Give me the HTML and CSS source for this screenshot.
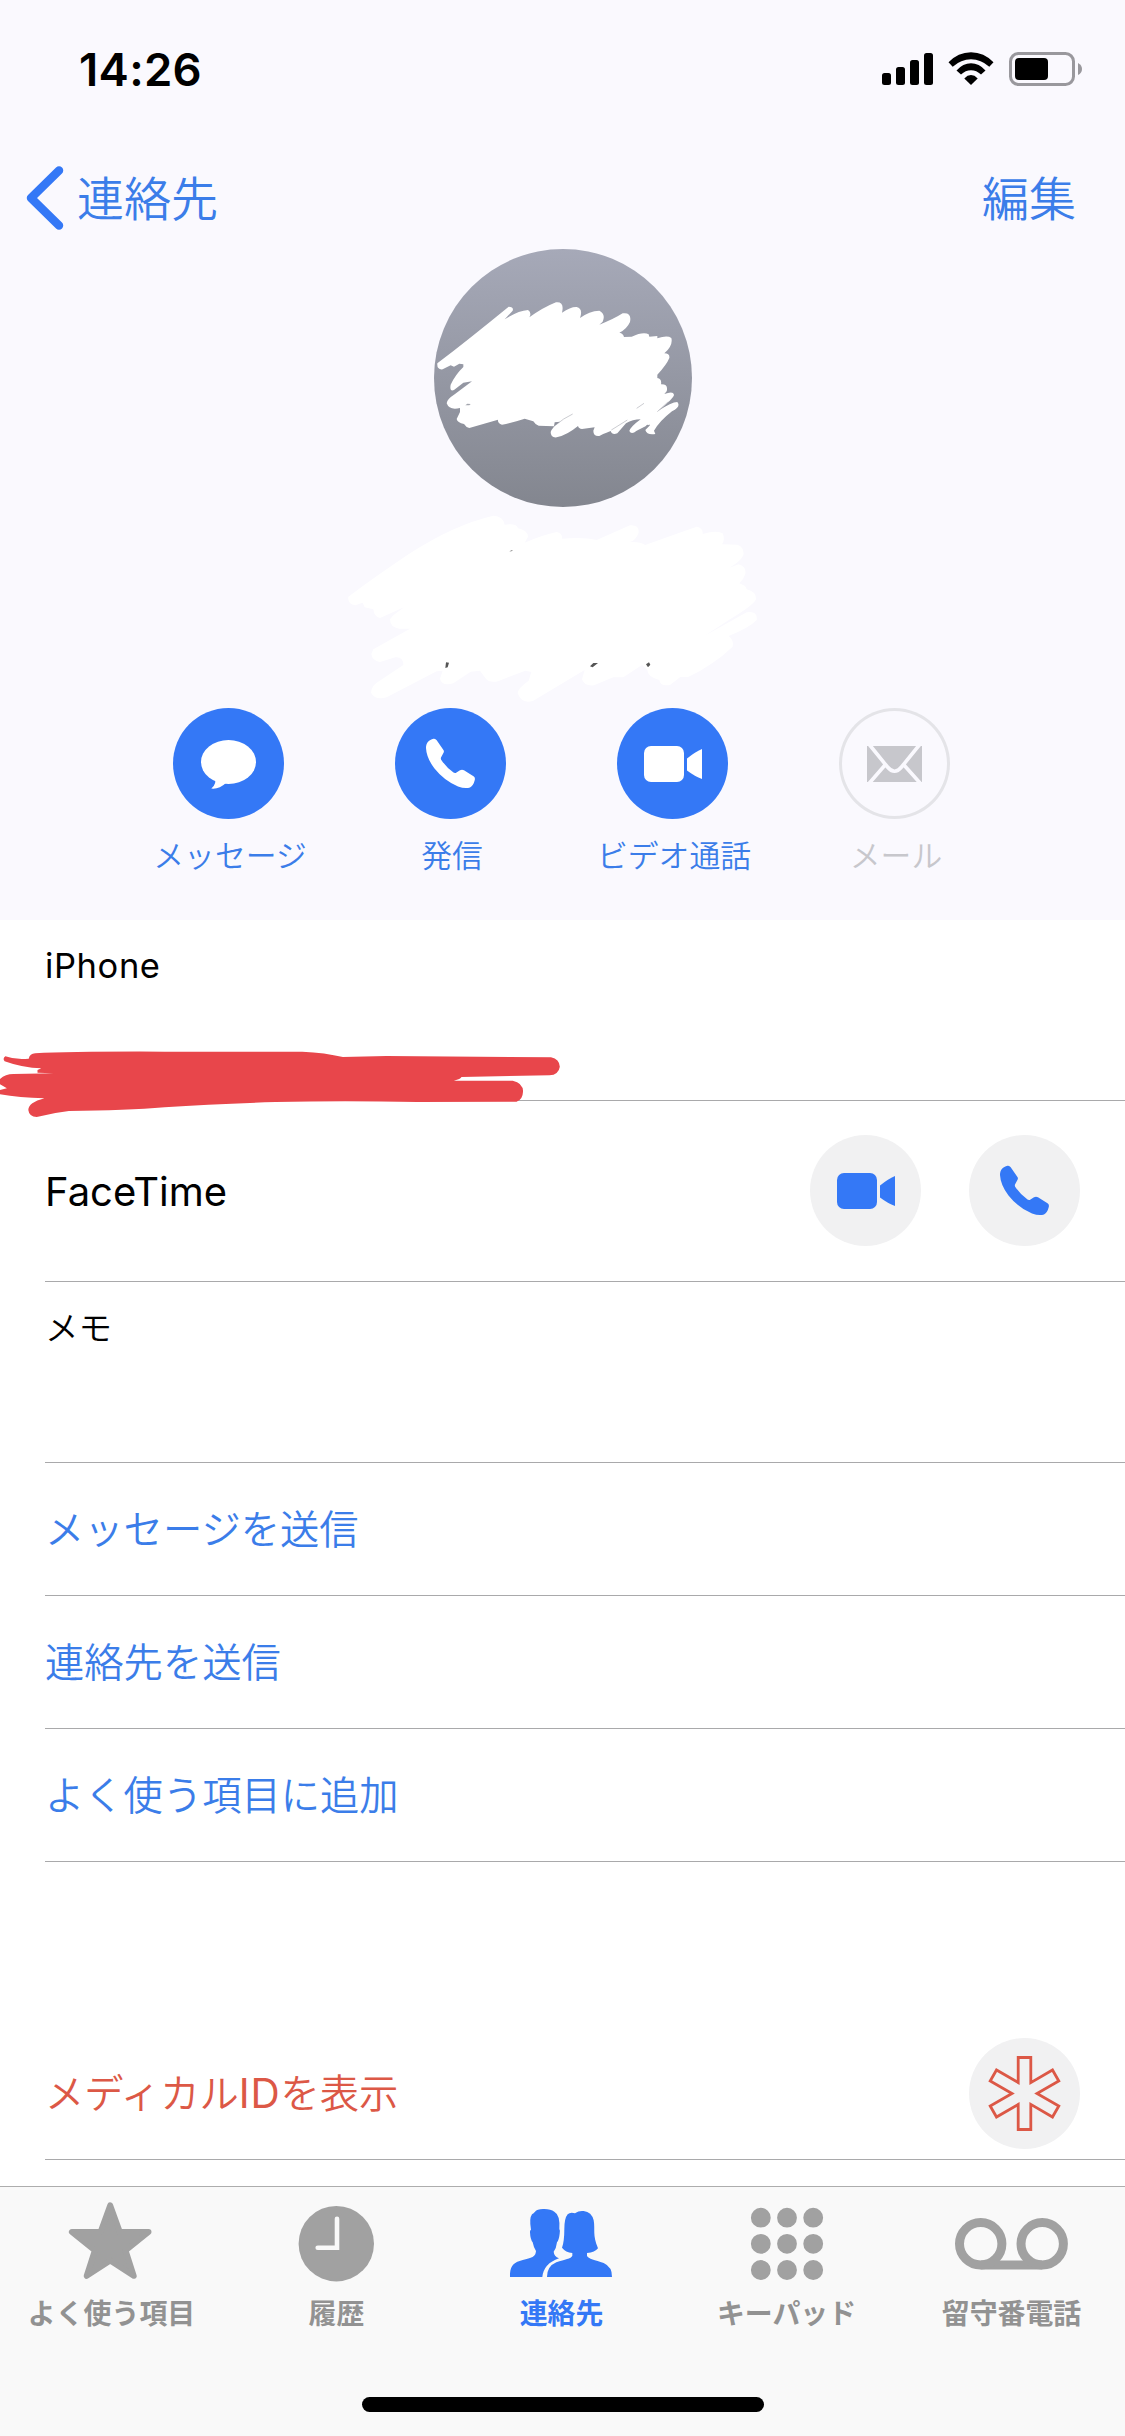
FILE: index.html
```html
<!DOCTYPE html>
<html lang="ja">
<head>
<meta charset="utf-8">
<title>連絡先</title>
<link rel="stylesheet" href="styles.css">
</head>
<body>
<svg class="defs" width="0" height="0" aria-hidden="true">
  <symbol id="video" viewBox="0 0 111 111"><rect x="27" y="38" width="40" height="36" rx="7"/><path d="M70 50.5Q78 44 85 41V71Q78 68.5 70 62.5Z"/></symbol>
  <symbol id="phone" viewBox="0 0 111 111"><path d="M31 40C31 35 34 31.8 38.5 30.8Q40.5 30.4 41.7 32.3L48.6 42.3Q49.3 43.6 48.4 45L46 49.5Q45.500 51 46.500 52.300Q51.500 59.500 58.500 64.600Q60 65.500 61.500 64.500L65 62.300Q67 61.300 69 62.300L78.500 68.300Q80.500 69.600 79.700 72.300Q78.500 77.500 75 79.500Q70 81 63 78.500Q49 72.500 39.500 60.500Q31.500 50 31 40Z"/></symbol>
</svg>
<main class="screen">
  <header class="hero">
    <div class="status">
      <span class="time">14:26</span>
      <svg class="indicators" width="202" height="36" viewBox="881 51 202 36">
        <g><rect x="882" y="73" width="9" height="12" rx="2.500"/><rect x="896" y="67" width="9" height="18" rx="2.500"/><rect x="910" y="60" width="9" height="25" rx="2.500"/><rect x="924" y="53" width="9" height="32" rx="2.500"/></g>
        <path d="M948.500 62.300Q958 52.200 971 52.200T993.500 62.300L989.300 66.700Q981 59.200 971 59.200T952.700 66.700Z"/>
        <path d="M956.500 70.500Q963 63.300 971 63.300T985.500 70.500L981 74.600Q976.500 70.300 971 70.300T961 74.600Z"/>
        <path d="M964.300 78.400Q967.500 75 971 75T977.700 78.400L971 85Z"/>
        <rect x="1010.500" y="53.500" width="63" height="31" rx="8" fill="none" stroke="#99989d" stroke-width="3"/>
        <rect x="1015" y="58" width="33" height="22" rx="4"/>
        <path d="M1078 63Q1082 65 1082 69T1078 75Z" fill="#99989d"/>
      </svg>
    </div>
    <nav class="nav">
      <a class="back"><svg width="38" height="64" viewBox="0 0 38 64"><path d="M33 4.500L5 32L33 59.500" fill="none" stroke="#3478f6" stroke-width="8.500" stroke-linecap="round" stroke-linejoin="round"/></svg><span>連絡先</span></a>
      <a>編集</a>
    </nav>
    <div class="avatar"></div>
    <svg class="scribble" viewBox="0 0 1350 1470" fill="#fff">
      <path d="M322 400Q420 325 536 230Q552 230 548 242L524 268Q565 242 594 240Q606 248 598 262Q640 232 678 217Q704 214 696 248Q722 230 740 231Q760 236 750 264Q778 243 808 242Q828 252 818 275L808 284Q850 268 878 250Q906 246 900 276Q890 298 868 308Q880 310 882 321L905 320Q940 304 956 313L958 320L982 318V325Q1012 315 1024 324Q1030 346 1003 370Q1020 370 1018 384Q1010 404 982 434V444Q996 446 993 463Q1016 462 1010 484L1003 492Q1030 482 1032 494Q1032 504 984 543Q1025 516 1042 516Q1054 530 1026 544Q990 572 972 602L976 612Q950 616 946 600L960 586Q950 582 948 588L920 602Q904 616 898 603Q902 590 932 568Q908 568 888 580L862 610Q846 616 842 603Q814 614 808 618Q790 620 790 602L794 592L756 597Q746 596 744 588Q710 616 680 622Q662 624 662 606Q666 592 690 575L674 577L672 589L626 587Q614 582 610 574L584 566Q548 578 516 584Q502 580 504 569L418 594Q408 592 402 582Q382 578 380 567L390 546V534Q358 542 350 520Q350 508 372 494L426 454L400 458L372 480Q358 486 362 464Q376 434 400 411L400 403L388 401L372 410L362 406L338 418Q320 420 322 400Z"/>
      <path d="M55 1100Q150 1030 240 970Q370 885 490 857Q520 858 524 884Q560 878 564 895Q592 900 594 920L584 938Q640 914 680 906Q698 910 696 926Q760 920 800 930L900 886Q928 884 926 908Q918 930 900 936Q930 934 946 945Q1000 925 1100 890Q1120 894 1118 912Q1160 900 1178 910Q1186 930 1176 943L1222 944Q1244 952 1240 976Q1230 996 1198 1013L1226 1003Q1250 1010 1246 1032Q1240 1050 1228 1060Q1250 1068 1250 1078Q1280 1086 1278 1108Q1270 1126 1200 1168L1124 1217L1250 1147Q1284 1142 1280 1170Q1260 1192 1196 1218Q1212 1230 1208 1250Q1150 1305 1076 1340Q1060 1342 1052 1340L1020 1365Q990 1370 988 1350Q952 1340 952 1320L936 1305L880 1342L850 1342L792 1366Q764 1370 756 1348L764 1320L610 1412Q576 1424 563 1390Q564 1374 596 1352L604 1326L586 1322L508 1352Q480 1362 466 1344L450 1322L422 1325L370 1360Q336 1370 330 1346L338 1322L320 1324L170 1402Q136 1412 123 1388Q124 1370 140 1358L220 1305Q220 1280 196 1282L150 1296Q126 1292 124 1272L130 1258L240 1196L208 1196Q180 1192 180 1168L190 1156L222 1132L150 1164Q132 1160 130 1138L104 1132L98 1118L76 1126Q52 1122 55 1100Z"/>
      <g fill="#555"><path d="M348 1297L357 1298L353 1312L346 1314ZM780 1309L790 1299L804 1299L788 1312ZM948 1303L957 1297L961 1304L954 1312ZM538 964L550 959L544 964Z"/><path d="M406 526L412 521L422 522L418 526Z" fill="#a2a5ad"/></g>
      <g fill="none" stroke="#9699a2" stroke-width="1.500"><path d="M676 586Q700 565 728 552M844 600L892 570M920 535L942 520M982 545L1015 515M928 602L960 584"/></g>
    </svg>
    <div class="actions">
      <a class="action"><span class="disc"><svg viewBox="0 0 111 111"><ellipse cx="55.500" cy="54" rx="27.500" ry="22"/><path d="M42 69Q44 76 38.300 80.500Q46 81.500 53 75Z"/></svg></span><span class="label">メッセージ</span></a>
      <a class="action"><span class="disc"><svg><use href="#phone"/></svg></span><span class="label">発信</span></a>
      <a class="action"><span class="disc"><svg><use href="#video"/></svg></span><span class="label">ビデオ通話</span></a>
      <a class="action off"><span class="disc"><svg viewBox="0 0 111 111"><path d="M28 38H83V74H28Z"/><path d="M29.500 35.500L48.500 59Q55.500 67.500 62.500 59L81.500 35.500M46.500 56.500L30 75.500M64.500 56.500L81.500 75.500" fill="none" stroke="#faf9fe" stroke-width="3.600"/></svg></span><span class="label">メール</span></a>
    </div>
  </header>
  <section class="list">
    <div class="row number"><span>iPhone</span></div>
    <div class="row facetime"><span>FaceTime</span>
      <span class="disc soft"><svg><use href="#video"/></svg></span>
      <span class="disc soft"><svg><use href="#phone"/></svg></span>
    </div>
    <div class="row memo"><span>メモ</span></div>
    <a class="row link">メッセージを送信</a>
    <a class="row link">連絡先を送信</a>
    <a class="row link">よく使う項目に追加</a>
    <a class="row medical"><span>メディカル<b>ID</b>を表示</span>
      <span class="disc soft"><svg viewBox="0 0 111 111"><path d="M49.200 19.500H61.800V44.600L83.500 32L89.800 43L68 55.500L89.800 68L83.500 79L61.800 66.400V91.500H49.200V66.400L27.500 79L21.200 68L43 55.500L21.200 43L27.500 32L49.200 44.600Z" fill="none" stroke="#dc5846" stroke-width="2.800"/></svg></span>
    </a>
    <svg class="redaction" viewBox="0 450 1568 210" preserveAspectRatio="none"><path d="M14 469Q40 480 75 476Q78 461 92 460Q190 454 430 455L790 455Q850 458 896 471L1010 468L1440 472Q1462 478 1463 500Q1460 524 1436 526L1206 531Q1204 537 1186 542L1340 542Q1366 548 1367 574Q1366 600 1350 605L1090 606Q900 602 720 606Q560 612 430 622Q330 632 180 633Q140 638 96 651Q76 650 74 630Q74 608 116 595Q50 593 0 583V570L18 565L0 553V537Q14 522 35 522L140 520L98 518V510L108 505Q60 504 12 484Q6 476 14 469Z" fill="#e8464b"/></svg>
  </section>
  <footer class="tabbar">
    <div class="tabs">
      <a class="tab"><svg viewBox="0 0 126 92"><path d="M61.200 10.400L70.800 37H99.500L76.500 55.500L84.700 80.800L61.200 65.500L37.700 80.800L45.900 55.500L22.900 37H51.600Z" stroke="#a1a1a1" stroke-width="6" stroke-linejoin="round"/></svg>よく使う項目</a>
      <a class="tab"><svg viewBox="0 0 126 92"><circle cx="62.300" cy="48.700" r="37.700"/><path d="M63 23.800V52.700H43.700" fill="none" stroke="#f9f9f9" stroke-width="4.600" stroke-linecap="round"/></svg>履歴</a>
      <a class="tab on"><svg viewBox="0 0 378 276"><path d="M33 246C32 216 42 204 62 198C88 190 108 188 110 174L111 168Q104 158 101 142Q94 134 93 112Q92 106 96 104Q90 70 99 58Q104 55 108 50Q114 42 132 42Q154 41 166 50Q184 60 181 102Q184 106 182 116Q180 134 174 142Q172 160 164 170Q165 184 180 190Q134 206 130 246Z"/><path d="M144 246Q144 214 172 202C198 192 216 192 220 182V174Q200 172 189 158Q196 140 196 102Q196 70 206 58Q214 50 228 55Q240 46 254 48Q278 51 284 76C289 104 280 120 297 160Q288 172 264 174V182C268 192 288 194 314 204Q340 216 339 246Z"/></svg>連絡先</a>
      <a class="tab"><svg viewBox="0 0 126 92"><path d="M36.800 22.700h.01M63 22.700h.01M89.200 22.700h.01M36.800 48.800h.01M63 48.800h.01M89.200 48.800h.01M36.800 75h.01M63 75h.01M89.200 75h.01" stroke="#a1a1a1" stroke-width="19.800" stroke-linecap="round"/></svg>キーパッド</a>
      <a class="tab"><svg viewBox="0 0 126 92"><path d="M31.700 70H93.200" stroke="#a1a1a1" stroke-width="9"/><g fill="none" stroke="#a1a1a1" stroke-width="9"><circle cx="31.700" cy="48.800" r="21.200"/><circle cx="93.200" cy="48.800" r="21.200"/></g></svg>留守番電話</a>
    </div>
    <div class="home"></div>
  </footer>
</main>
</body>
</html>
```
FILE: styles.css
```css
* { box-sizing: border-box; }
body {
  margin: 0;
  background: #fff;
  color: #000;
  font-family: Inter, "Noto Sans CJK JP", sans-serif;
  font-weight: 350;
}
svg { display: block; }
.defs { position: absolute; }
.screen {
  position: relative;
  display: flex;
  flex-direction: column;
  width: 1125px;
  height: 2436px;
  overflow: hidden;
}
.hero {
  position: relative;
  height: 920px;
  background: #faf9fe;
}
.status {
  display: flex;
  align-items: center;
  justify-content: space-between;
  height: 138px;
  padding: 0 42px 0 79px;
}
.time { font-size: 45.5px; font-weight: 600; letter-spacing: .3px; }
.nav {
  display: flex;
  align-items: center;
  justify-content: space-between;
  height: 111px;
  padding: 9px 49px 0 26px;
  color: #3b7de9;
  font-size: 47px;
  line-height: 60px;
}
.nav span, .nav > a:last-child { padding-top: 1px; }
.back { display: flex; align-items: center; gap: 13px; }
.avatar {
  width: 258px;
  height: 258px;
  margin: 0 auto 201px;
  border-radius: 50%;
  background: linear-gradient(#a6a9b8, #83868f);
}
.scribble {
  position: absolute;
  left: 330px;
  top: 230px;
  width: 450px;
  height: 490px;
}
.actions {
  position: relative;
  display: grid;
  grid-template-columns: repeat(4, 222px);
  padding-left: 117px;
}
.action {
  display: flex;
  flex-direction: column;
  align-items: center;
  gap: 16px;
  color: #3b7de9;
  font-size: 30.8px;
  line-height: 40px;
  white-space: nowrap;
}
.label { padding: 1px 0 0 4px; }
.disc {
  flex: none;
  width: 111px;
  height: 111px;
  border-radius: 50%;
  background: #3478f6;
  fill: #fff;
}
.disc svg { width: 111px; height: 111px; }
.off { color: #c7c7cc; }
.off .disc {
  background: none;
  box-shadow: inset 0 0 0 3px #e4e4e8;
  fill: #c7c7cc;
}
.disc.soft { background: #f1f1f2; fill: #3478f6; }
.list { position: relative; flex: 1; }
.row {
  display: flex;
  align-items: center;
  margin-left: 45px;
  border-bottom: 1px solid #a9a9ab;
  font-size: 39.3px;
  line-height: 50px;
}
.number {
  align-items: flex-start;
  height: 181px;
  padding-top: 21px;
  font-size: 34.5px;
  font-weight: 400;
  letter-spacing: .6px;
}
.facetime {
  gap: 48px;
  height: 181px;
  padding: 0 45px 2px 0;
  font-size: 40px;
  font-weight: 400;
}
.facetime > :first-child { flex: 1; padding-top: 3px; }
.memo {
  align-items: flex-start;
  height: 181px;
  padding-top: 21px;
  font-size: 33.5px;
}
.link { height: 133px; padding-top: 2px; color: #3b7de9; }
.medical {
  justify-content: space-between;
  height: 298px;
  padding: 165px 45px 0 0;
  color: #dc5846;
}
.medical > :first-child { padding-top: 2px; }
.medical b { font-size: 40.5px; font-weight: 400; letter-spacing: .8px; }
.redaction {
  position: absolute;
  left: 0;
  top: 130px;
  width: 600px;
  height: 70px;
}
.tabbar {
  height: 250px;
  border-top: 1px solid #adadad;
  background: #f9f9f9;
}
.tabs {
  display: grid;
  grid-template-columns: repeat(5, 225px);
  height: 210px;
  margin-left: -1px;
  padding-top: 8px;
}
.tab {
  display: flex;
  flex-direction: column;
  align-items: center;
  gap: 7px;
  color: #929292;
  fill: #a1a1a1;
  font-size: 27.9px;
  font-weight: 600;
  line-height: 40px;
  white-space: nowrap;
}
.tab svg { width: 126px; height: 92px; }
.tab.on { color: #3478f6; fill: #3478f6; }
.home {
  width: 402px;
  height: 15px;
  margin: 0 auto;
  border-radius: 8px;
  background: #000;
}
```
